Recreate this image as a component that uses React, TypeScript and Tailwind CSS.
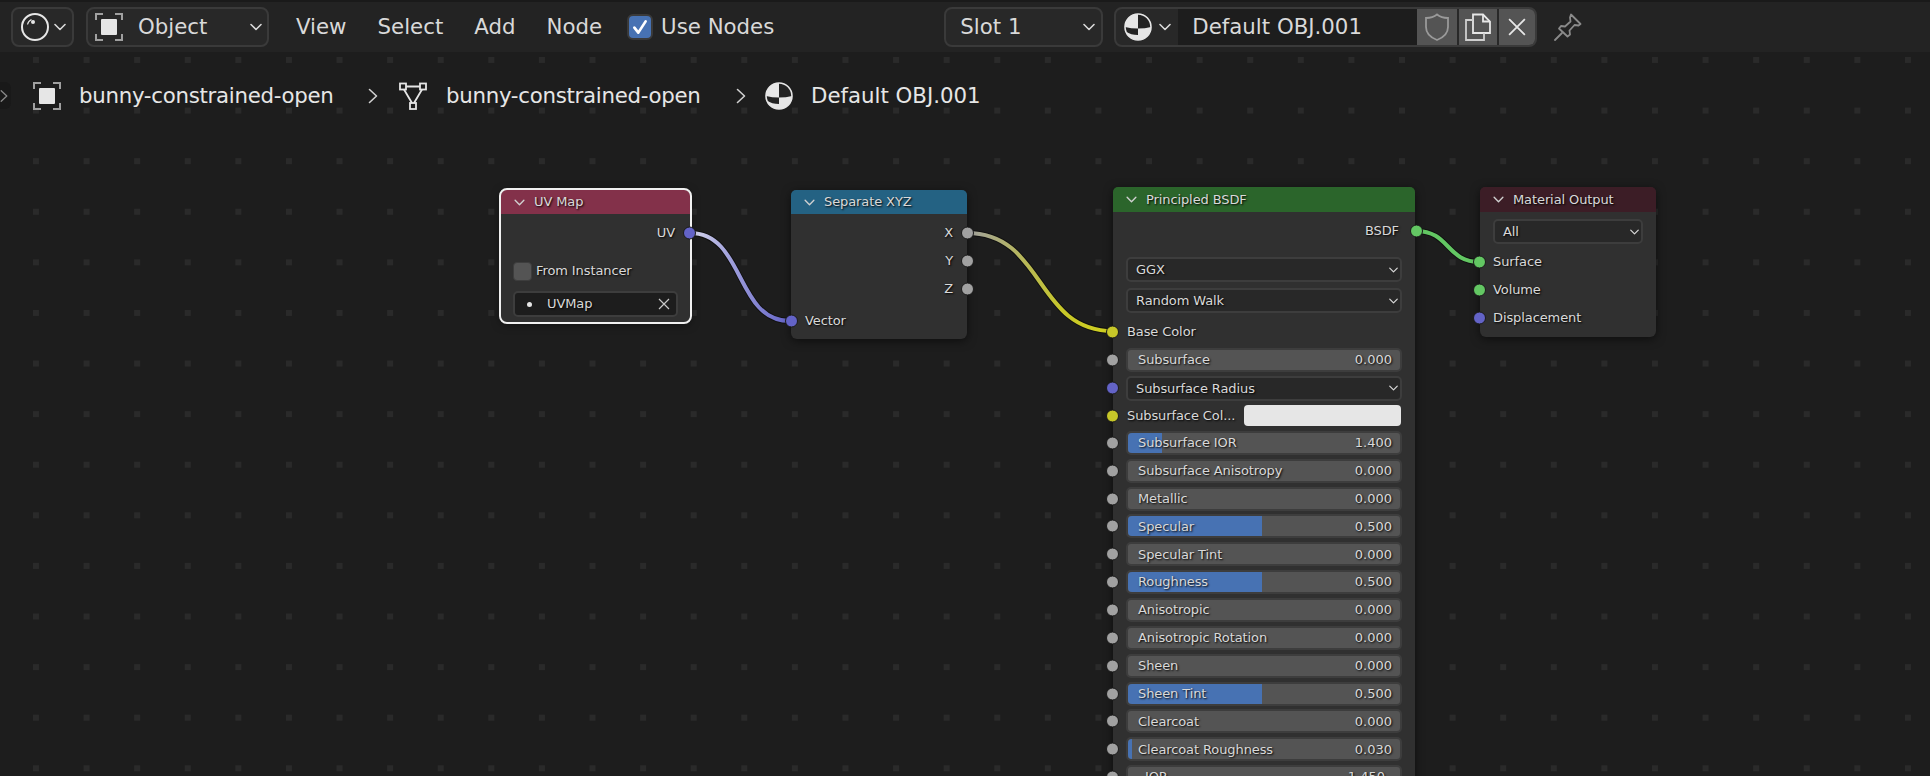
import { ReactNode } from "react";

const font = "font-['DejaVu_Sans',sans-serif]";

const Chevron = ({ className = "" }: { className?: string }) => (
  <svg viewBox="0 0 12 8" className={className} fill="none" stroke="currentColor" strokeWidth="1.6" strokeLinecap="round" strokeLinejoin="round">
    <path d="M1 1.500 6 6.500 11 1.500" />
  </svg>
);

const ChevronRight = ({ className = "" }: { className?: string }) => (
  <svg viewBox="0 0 10 16" className={className} fill="none" stroke="currentColor" strokeWidth="1.6" strokeLinecap="round" strokeLinejoin="round">
    <path d="M1.500 1.500 8.500 8 1.500 14.500" />
  </svg>
);

const ObjectIcon = () => (
  <svg viewBox="0 0 28 28" className="w-7 h-7 shrink-0" fill="none">
    <path d="M1 7V1h7M20 1h7v6M27 21v6h-7M8 27H1v-6" stroke="#a0a0a0" strokeWidth="2" />
    <rect x="6" y="6" width="16" height="16" rx="1" fill="#e6e6e6" />
  </svg>
);

const MeshIcon = () => (
  <svg viewBox="0 0 28 28" className="w-7 h-7 shrink-0" fill="none" stroke="#e6e6e6" strokeWidth="1.8">
    <rect x="1" y="1.500" width="6" height="6" />
    <rect x="21" y="1.500" width="6" height="6" />
    <rect x="11" y="21" width="6" height="6" />
    <path d="M7 4.500h14M5 7.500l8 13.500M23 7.500 15 21" />
  </svg>
);

const MaterialIcon = () => (
  <svg viewBox="0 0 28 28" className="w-7 h-7 shrink-0">
    <circle cx="14" cy="14" r="13" fill="#232323" stroke="#e6e6e6" strokeWidth="1.6" />
    <path d="M14 1A13 13 0 0 0 1 14Q7 15.500 14 15.500z" fill="#e6e6e6" />
    <path d="M14 15.500Q21 15.500 27 14A13 13 0 0 1 14 27z" fill="#e6e6e6" />
    <path d="M1.800 18.500Q7 22 14 22V27A13 13 0 0 1 1.800 18.500z" fill="#e6e6e6" />
  </svg>
);

const ShaderIcon = () => (
  <svg viewBox="0 0 28 28" className="w-7 h-7 shrink-0" fill="none" stroke="#e6e6e6">
    <circle cx="14" cy="14" r="13" strokeWidth="2" />
    <circle cx="12" cy="9" r="2" fill="#e6e6e6" stroke="none" />
    <path d="M6.500 11.500c.5-2.500 2-4 4-5" strokeWidth="1.200" />
  </svg>
);

const HeaderBox = ({ className, children }: { className: string; children: ReactNode }) => (
  <div className={`flex items-center h-[40px] rounded-lg bg-[#282828] border-2 border-[#3a3a3a] ${className}`}>
    {children}
  </div>
);

const MenuItem = ({ label, className }: { label: string; className: string }) => (
  <span className={className}>{label}</span>
);

const Header = () => (
  <div className="h-[52px] shrink-0 flex items-center pl-[11px] bg-[#232323] border-t-2 border-[#1a1a1a] text-[21.3px] text-[#d9d9d9] whitespace-nowrap">
    <HeaderBox className="w-[63px] pl-[8px] gap-[5px]">
      <ShaderIcon />
      <Chevron className="w-[12px] h-[8px]" />
    </HeaderBox>
    <HeaderBox className="w-[183px] ml-[12px] pl-[7px]">
      <ObjectIcon />
      <span className="ml-[15px]">Object</span>
      <Chevron className="w-[12px] h-[8px] ml-auto mr-[5px]" />
    </HeaderBox>
    <MenuItem label="View" className="ml-[27px]" />
    <MenuItem label="Select" className="ml-[31px]" />
    <MenuItem label="Add" className="ml-[31px]" />
    <MenuItem label="Node" className="ml-[31px]" />
    <div className="ml-[25px] w-[26px] h-[26px] shrink-0 rounded-md bg-[#4772b3] border-2 border-[#3a3a3a] flex items-center justify-center">
      <svg viewBox="0 0 16 16" className="w-[18px] h-[18px]" fill="none" stroke="#fff" strokeWidth="2.400" strokeLinecap="round" strokeLinejoin="round">
        <path d="M3 8.500 6.500 13 13 3" />
      </svg>
    </div>
    <span className="ml-[8px]">Use Nodes</span>
    <HeaderBox className="w-[159px] ml-[170px] pl-[14px]">
      <span>Slot 1</span>
      <Chevron className="w-[12px] h-[8px] ml-auto mr-[6px]" />
    </HeaderBox>
    <div className="flex items-stretch h-[40px] w-[423px] ml-[11px] rounded-lg bg-[#282828] border-2 border-[#3a3a3a] overflow-hidden">
      <div className="w-[62px] shrink-0 flex items-center pl-[8px] gap-[7px]">
        <MaterialIcon />
        <Chevron className="w-[12px] h-[8px]" />
      </div>
      <div className="w-[239px] shrink-0 bg-[#1d1d1d] pl-[14px] flex items-center">Default OBJ.001</div>
      <div className="w-[40px] shrink-0 bg-[#545454] flex items-center justify-center">
        <svg viewBox="0 0 26 28" className="w-[26px] h-[28px]" fill="none" stroke="#9a9a9a" strokeWidth="1.800">
          <path d="M13 1.500c3 2.500 7 3.500 11 3.500v9c0 6-4.500 10.500-11 13C6.500 24.500 2 20 2 14V5c4 0 8-1 11-3.500z" />
        </svg>
      </div>
      <div className="w-[38px] shrink-0 ml-[2px] bg-[#545454] flex items-center justify-center">
        <svg viewBox="0 0 28 28" className="w-[28px] h-[28px]" fill="none" stroke="#e6e6e6" strokeWidth="1.800">
          <path d="M9 1.500h10l7 7V20H9z" />
          <path d="M19 1.500v7h7" />
          <path d="M9 7H2v20h18v-7" stroke="#cfcfcf" />
        </svg>
      </div>
      <div className="flex-1 ml-[2px] bg-[#545454] flex items-center justify-center">
        <svg viewBox="0 0 16 16" className="w-[18px] h-[18px]" fill="none" stroke="#e6e6e6" strokeWidth="1.600">
          <path d="M1 1l14 14M15 1 1 15" />
        </svg>
      </div>
    </div>
    <svg viewBox="0 0 28 28" className="w-[28px] h-[28px] ml-[17px]" fill="none" stroke="#8a8a8a" strokeWidth="1.800" strokeLinejoin="round" strokeLinecap="round">
      <path d="M17 1.500 26.500 11l-2 1.500-4-.5-5 5.500.5 4-2.500 2L5 15.500l2-2.500 4 .5 5.500-5-.5-4z" />
      <path d="M8 20 1 27" />
    </svg>
  </div>
);

const Breadcrumb = () => (
  <div className="flex items-center h-[87px] text-[21.3px] text-[#e6e6e6] whitespace-nowrap">
    <div className="w-[11px] h-[27px] rounded-r-md bg-[#191919] flex items-center text-[#8a8a8a]">
      <ChevronRight className="w-[8px] h-[14px]" />
    </div>
    <div className="ml-[22px]"><ObjectIcon /></div>
    <span className="ml-[18px] w-[255px] tracking-[-0.28px]">bunny-constrained-open</span>
    <ChevronRight className="w-[10px] h-[16px] ml-[34px] text-[#d0d0d0]" />
    <div className="ml-[21px]"><MeshIcon /></div>
    <span className="ml-[19px] w-[254px] tracking-[-0.28px]">bunny-constrained-open</span>
    <ChevronRight className="w-[10px] h-[16px] ml-[36px] text-[#d0d0d0]" />
    <div className="ml-[19px]"><MaterialIcon /></div>
    <span className="ml-[18px]">Default OBJ.001</span>
  </div>
);

// inset: the parent has a 2px border, so the offset is measured from inside it
const Socket = ({ color, side, inset }: { color: string; side: "left" | "right"; inset?: boolean }) => (
  <span
    className={`absolute top-1/2 -translate-y-1/2 w-[11px] h-[11px] rounded-full border border-[#1a1a1a] box-content ${side === "left" ? (inset ? "-left-[22px]" : "-left-[20px]") : "-right-[21px]"} ${color}`}
  />
);

const grey = "bg-[#a1a1a1]";
const blue = "bg-[#6363c7]";
const yellow = "bg-[#c7c729]";
const green = "bg-[#63c763]";

const labelClass = "text-[13px] text-[#d9d9d9] whitespace-nowrap tracking-[-0.1px] [text-shadow:1px_1px_2px_#000]";

const NodeHead = ({ title, color, h = "h-[25px]" }: { title: string; color: string; h?: string }) => (
  <div className={`${h} flex items-center pl-[13px] gap-[9px] ${color} rounded-t-[5px] ${labelClass}`}>
    <Chevron className="w-[11px] h-[7px] text-[#d0d0d0]" />
    <span>{title}</span>
  </div>
);

const OutRow = ({ label, color, labelGap = "" }: { label: string; color: string; labelGap?: string }) => (
  <div className={`relative flex items-center justify-end h-[28px] ${labelClass}`}>
    <span className={labelGap}>{label}</span>
    <Socket color={color} side="right" />
  </div>
);

const InRow = ({ label, color, labelGap = "" }: { label: string; color: string; labelGap?: string }) => (
  <div className={`relative flex items-center h-[28px] ${labelClass}`}>
    <span className={labelGap}>{label}</span>
    <Socket color={color} side="left" />
  </div>
);

const Select = ({ label, socket, className = "" }: { label: string; socket?: string; className?: string }) => (
  <div className={`relative flex items-center h-[25px] rounded-[5px] bg-[#282828] border-2 border-[#3d3d3d] pl-[8px] pr-[2px] ${labelClass} ${className}`}>
    {label}
    <Chevron className="w-[9px] h-[6px] ml-auto text-[#d9d9d9]" />
    {socket && <Socket color={socket} side="left" inset />}
  </div>
);

const Slider = ({ label, value, fill, shifted }: { label: string; value: string; fill?: string; shifted?: boolean }) => (
  <div className={`relative h-[24px] mb-[3.870px] rounded-[5px] bg-[#545454] border-2 border-[#3d3d3d] flex items-center justify-between ${shifted ? "pl-[17px] pr-[15px]" : "pl-[10px] pr-[8px]"}`}>
    {fill && <div className={`absolute left-0 top-0 bottom-0 rounded-l-[4px] bg-[#4772b3] ${fill}`} />}
    <span className={`relative ${labelClass}`}>{label}</span>
    <span className={`relative ${labelClass} tracking-normal`}>{value}</span>
    <Socket color={grey} side="left" inset />
  </div>
);

const sliders: { label: string; value: string; fill?: string; shifted?: boolean }[] = [
  { label: "Subsurface IOR", value: "1.400", fill: "w-[34px]" },
  { label: "Subsurface Anisotropy", value: "0.000" },
  { label: "Metallic", value: "0.000" },
  { label: "Specular", value: "0.500", fill: "w-[134px]" },
  { label: "Specular Tint", value: "0.000" },
  { label: "Roughness", value: "0.500", fill: "w-[134px]" },
  { label: "Anisotropic", value: "0.000" },
  { label: "Anisotropic Rotation", value: "0.000" },
  { label: "Sheen", value: "0.000" },
  { label: "Sheen Tint", value: "0.500", fill: "w-[134px]" },
  { label: "Clearcoat", value: "0.000" },
  { label: "Clearcoat Roughness", value: "0.030", fill: "w-[4px]" },
  { label: "IOR", value: "1.450", shifted: true },
];

const nodeClass = "absolute bg-[#303030] rounded-[6px] shadow-[0_2px_10px_rgba(0,0,0,0.55)]";

const Links = () => (
  <svg className="absolute left-0 top-0 w-[1930px] h-[724px]" fill="none" strokeWidth="4" strokeLinecap="round">
    <defs>
      <linearGradient id="uv" x1="0" x2="1" y1="0" y2="0">
        <stop offset="0" stopColor="#d8d8ec" />
        <stop offset="0.4" stopColor="#a0a0dc" />
        <stop offset="1" stopColor="#6363c7" />
      </linearGradient>
      <linearGradient id="xyz" x1="0" x2="1" y1="0" y2="0">
        <stop offset="0" stopColor="#a1a1a1" />
        <stop offset="0.65" stopColor="#c7c729" />
        <stop offset="1" stopColor="#d0d020" />
      </linearGradient>
    </defs>
    <path d="M690 181C745 181 735 269 790 269" stroke="#000" strokeOpacity="0.45" strokeWidth="6" />
    <path d="M690 181C745 181 735 269 790 269" stroke="url(#uv)" />
    <path d="M967 181C1045 181 1035 279 1113 279" stroke="#000" strokeOpacity="0.45" strokeWidth="6" />
    <path d="M967 181C1045 181 1035 279 1113 279" stroke="url(#xyz)" />
    <path d="M1416 179C1450 179 1446 210 1480 210" stroke="#000" strokeOpacity="0.45" strokeWidth="6" />
    <path d="M1416 179C1450 179 1446 210 1480 210" stroke="#63c763" />
  </svg>
);

const Canvas = () => (
  <div className="relative flex-1 bg-[#1d1d1d] bg-[conic-gradient(from_270deg_at_6px_6px,#2a2a2a_90deg,transparent_0)] bg-[size:50.6px_50.6px] bg-[position:33px_5px]">
    <Breadcrumb />
    <Links />

    <div className={`${nodeClass} left-[501px] top-[138px] w-[189px] h-[132px] outline-2 outline-[#f0f0f0]`}>
      <NodeHead title="UV Map" color="bg-[#83314a]" h="h-[24px]" />
      <div className="pl-[12px] pr-[15px] pt-[5px]">
        <OutRow label="UV" color={blue} />
        <div className={`flex items-center h-[28px] mt-[10px] gap-[4px] ${labelClass}`}>
          <span className="w-[19px] h-[19px] rounded-[4px] bg-[#545454] border border-[#3d3d3d]" />
          From Instancer
        </div>
        <div className={`flex items-center h-[26px] mt-[6px] -mr-[3px] rounded-[5px] bg-[#1d1d1d] border-2 border-[#3d3d3d] pl-[12px] pr-[6px] ${labelClass}`}>
          <span className="w-[5px] h-[5px] rounded-full bg-[#e6e6e6]" />
          <span className="ml-[15px]">UVMap</span>
          <svg viewBox="0 0 12 12" className="w-[12px] h-[12px] ml-auto" fill="none" stroke="#c8c8c8" strokeWidth="1.200">
            <path d="M1 1l10 10M11 1 1 11" />
          </svg>
        </div>
      </div>
    </div>

    <div className={`${nodeClass} left-[791px] top-[138px] w-[176px] h-[149px]`}>
      <NodeHead title="Separate XYZ" color="bg-[#246283]" h="h-[24px]" />
      <div className="pl-[14px] pr-[14px] pt-[5px]">
        <OutRow label="X" color={grey} />
        <OutRow label="Y" color={grey} />
        <OutRow label="Z" color={grey} />
        <div className="mt-[4px]"><InRow label="Vector" color={blue} /></div>
      </div>
    </div>

    <div className={`${nodeClass} left-[1113px] top-[135px] w-[302px] h-[600px]`}>
      <NodeHead title="Principled BSDF" color="bg-[#2b652b]" />
      <div className="pl-[13px] pr-[13px] pt-[5px]">
        <OutRow label="BSDF" color={green} labelGap="mr-[3px]" />
        <Select label="GGX" className="mt-[12px]" />
        <Select label="Random Walk" className="mt-[6px]" />
        <div className="mt-[5px]"><InRow label="Base Color" color={yellow} labelGap="ml-[1px]" /></div>
        <div className="mt-[2px]"><Slider label="Subsurface" value="0.000" /></div>
        <Select label="Subsurface Radius" socket={blue} />
        <div className={`relative flex items-center h-[28px] mt-[1px] ${labelClass}`}>
          <span className="ml-[1px]">Subsurface Col...</span>
          <span className="ml-auto mr-[1px] w-[157px] h-[21px] rounded-[4px] bg-[#e6e6e6]" />
          <Socket color={yellow} side="left" />
        </div>
        <div className="mt-[1px]">
          {sliders.map((s) => (
            <Slider key={s.label} {...s} />
          ))}
        </div>
      </div>
    </div>

    <div className={`${nodeClass} left-[1480px] top-[135px] w-[176px] h-[150px]`}>
      <NodeHead title="Material Output" color="bg-[#3c1d26]" />
      <div className="pl-[13px] pr-[13px] pt-[7px]">
        <Select label="All" />
        <div className="mt-[4px]">
          <InRow label="Surface" color={green} />
          <InRow label="Volume" color={green} />
          <InRow label="Displacement" color={blue} />
        </div>
      </div>
    </div>
  </div>
);

export default function App() {
  return (
    <div className={`w-[1930px] h-[776px] overflow-hidden flex flex-col ${font}`}>
      <Header />
      <Canvas />
    </div>
  );
}
